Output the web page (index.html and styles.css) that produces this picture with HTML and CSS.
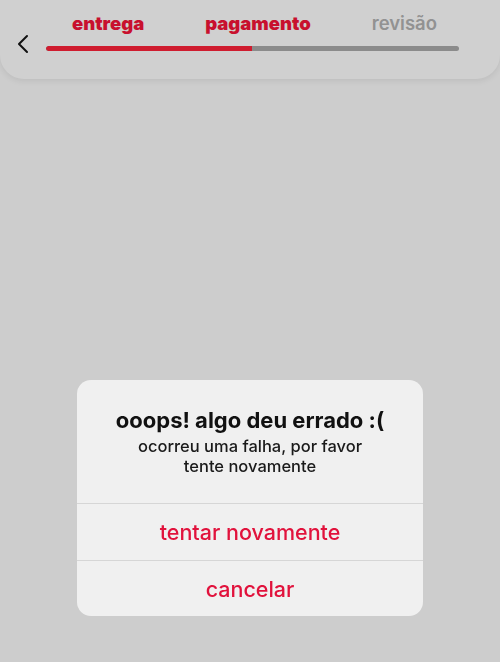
FILE: index.html
```html
<!DOCTYPE html>
<html lang="pt-BR">
<head>
    <meta charset="UTF-8">
    <meta name="viewport" content="width=device-width, initial-scale=1.0">
    <title>Pagamento</title>
    <link rel="stylesheet" href="styles.css">
</head>
<body>
    <header class="topbar">
        <button class="back" type="button" aria-label="voltar">
            <svg width="14" height="20" viewBox="0 0 14 20">
                <path d="M11 2 L3 10 L11 18" fill="none" stroke="#111" stroke-width="2" stroke-linecap="round" stroke-linejoin="round"/>
            </svg>
        </button>
        <div class="steps">
            <div class="labels">
                <span class="step done">entrega</span>
                <span class="step done">pagamento</span>
                <span class="step">revisão</span>
            </div>
            <div class="track"><div class="fill" style="width: 49.9%"></div></div>
        </div>
    </header>

    <div class="overlay">
        <div class="dialog">
            <div class="dialog-body">
                <h2>ooops! algo deu errado :(</h2>
                <p>ocorreu uma falha, por favor<br>tente novamente</p>
            </div>
            <button class="action" type="button">tentar novamente</button>
            <button class="action" type="button">cancelar</button>
        </div>
    </div>
</body>
</html>
```

FILE: styles.css
```css
* {
    box-sizing: border-box;
}
body {
    margin: 0;
    height: 662px;
    background: #cdcdcd;
    font-family: Inter, "Liberation Sans", sans-serif;
    overflow: hidden;
}
.topbar {
    height: 79px;
    background: #d0d0d0;
    border-radius: 0 0 24px 24px;
    box-shadow: 0 2px 6px rgba(0, 0, 0, 0.08);
    display: flex;
    align-items: flex-start;
    padding: 10px 41px 0 16px;
}
.back {
    border: none;
    background: none;
    padding: 0;
    margin: 24px 16px 0 0;
    width: 14px;
    height: 20px;
    cursor: pointer;
}
.steps {
    flex: 1;
}
.labels {
    display: flex;
    justify-content: space-between;
    padding: 0 22px 0 26px;
    height: 26px;
    align-items: center;
}
.step {
    font-size: 18.5px;
    font-weight: 600;
    color: #929292;
}
.step.done {
    font-weight: 900;
    color: #c8102e;
}
.track {
    margin-top: 10px;
    height: 5px;
    border-radius: 3px;
    background: #8b8b8b;
    overflow: hidden;
}
.fill {
    height: 100%;
    background: #cf1c2f;
    border-radius: 3px 0 0 3px;
}
.overlay {
    position: fixed;
    inset: 0;
    display: flex;
    justify-content: center;
    align-items: flex-end;
    padding-bottom: 46px;
}
.dialog {
    width: 346px;
    background: #f0f0f0;
    border-radius: 14px;
    overflow: hidden;
}
.dialog-body {
    padding: 27px 16px 27px 16px;
    text-align: center;
    border-bottom: 1px solid #d6d6d6;
}
.dialog-body h2 {
    margin: 0;
    font-size: 22px;
    line-height: 26px;
    font-weight: 700;
    color: #111;
}
.dialog-body p {
    margin: 3px 0 0 0;
    font-size: 16.5px;
    line-height: 20px;
    font-weight: 500;
    color: #1a1a1a;
}
.action {
    display: block;
    width: 100%;
    height: 56px;
    border: none;
    background: none;
    font-family: inherit;
    font-size: 21.5px;
    font-weight: 500;
    color: #e1123c;
    cursor: pointer;
}
.action + .action {
    border-top: 1px solid #d6d6d6;
}
```
